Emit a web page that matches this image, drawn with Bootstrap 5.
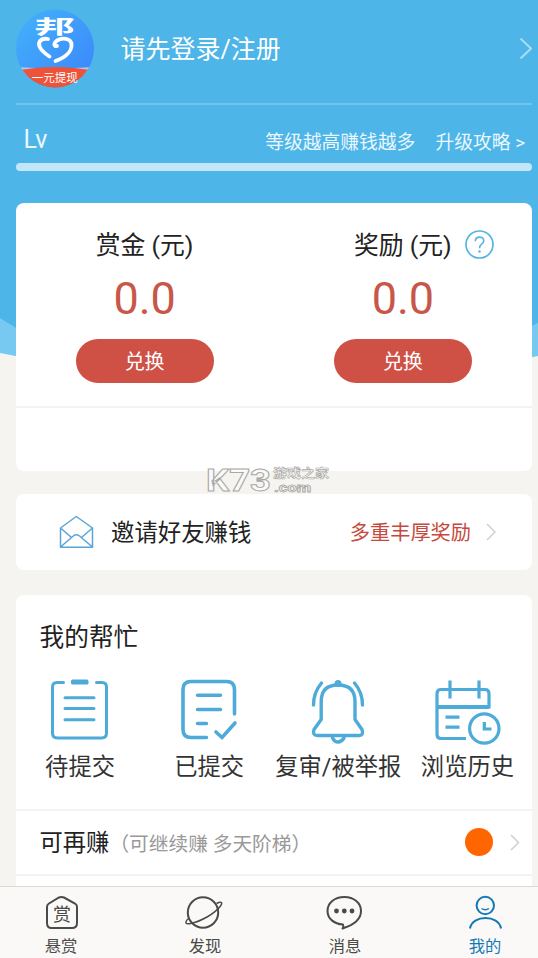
<!DOCTYPE html>
<html lang="zh-CN">
<head>
<meta charset="utf-8">
<meta name="viewport" content="width=device-width, initial-scale=1">
<title>我的</title>
<link href="https://cdn.jsdelivr.net/npm/bootstrap@5.3.0/dist/css/bootstrap.min.css" rel="stylesheet">
<style>
body{font-family:Roboto,"Noto Sans CJK SC",sans-serif;background:#f5f4f0;color:#222;line-height:1}
svg{display:block;flex:none}
svg text{font-family:Roboto,"Noto Sans CJK SC",sans-serif}
.app{width:538px;height:958px}
.screen{padding:0 6px 0 15.5px;min-height:0}
.hero-bg{z-index:0}
.layer{z-index:1}
.profile{height:105px;border-bottom:2px solid #71c4ee;padding-top:9px}
.login{font-size:25px;margin-left:26px;line-height:82px}
.level{height:58px;padding:0 7px 0 8px;font-size:18.8px;color:#e9f7fe}
.lv{font-size:25px;line-height:69px}
.level-text{line-height:77px}
.level-bar{height:8px;background:#c3e6f8;border-radius:4px}
.panel{background:#fff;border-radius:8px}
.wallet{margin-top:32px;height:268px}
.wallet-top{height:205px;border-bottom:2px solid #f3f3f2}
.wlabel{font-size:24.8px;line-height:32px;margin-top:27px}
.help{left:100%;top:0;margin-left:13px}
.amount{font-size:45px;line-height:50px;margin-top:12px;color:#c8574a}
.pill{width:138px;height:44px;border-radius:22px;background:#cf5044;color:#fff;font-size:20px;line-height:47px;margin-top:15px;padding:0;border:0}
.brandmark{left:200px;top:460px;z-index:2}
.invite{margin-top:23px;height:76px;padding:0 36px 0 43px}
.invite-title{font-size:23.4px;margin-left:17.5px;padding-top:3px}
.invite-note{font-size:20.2px;color:#c5493e;margin-right:15px;padding-top:3px}
.help-card{margin-top:25px;height:320px}
.sec-title{font-size:24.7px;line-height:32px;padding:27px 0 0 24px}
.tiles{margin-top:22px;height:133px}
.tile-name{font-size:23.3px;line-height:32px;margin-top:4.5px;color:#333;white-space:nowrap}
.entry{height:65px;border-top:2px solid #f3f3f2;padding:0 12px 0 24px;font-size:23.3px}
.entry-name{padding-top:3px}
.entry-note{font-size:19.7px;color:#999;padding-top:4px}
.dot{width:28px;height:28px;background:#ff6600;margin:-1px 17px 0 0}
.tabs{height:72px;border-top:1px solid #dcd9d8;background:#faf9f8;padding:7px 23px 0 31px;z-index:3}
.tab-link{width:60px;color:#4a4a48;font-size:16.3px;font-weight:400;text-decoration:none}
.tab-link span{line-height:24px;margin-top:3px}
.tab-link.current{color:#1479b3}
</style>
</head>
<body>
<div class="app d-flex flex-column position-relative overflow-hidden">
  <svg class="hero-bg position-absolute top-0 start-0" width="538" height="370" viewBox="0 0 538 370">
    <path d="M0 0H538V356Q270 410 0 353Z" fill="#77c9f1"/>
    <path d="M0 0H538V323L500 340L16 328L0 318Z" fill="#4db5e8"/>
  </svg>

  <main class="screen layer position-relative flex-grow-1 overflow-hidden">
    <header class="text-white">
      <div class="profile d-flex">
        <svg width="79" height="79" viewBox="16 9 79 79">
          <defs>
            <linearGradient id="sky" x1="0" y1="0" x2="1" y2="1"><stop offset="0" stop-color="#43b4fa"/><stop offset="1" stop-color="#3b83fb"/></linearGradient>
            <clipPath id="disc"><circle cx="55" cy="48.500" r="39"/></clipPath>
          </defs>
          <g clip-path="url(#disc)">
            <path d="M15 9H95V88H15Z" fill="url(#sky)"/>
            <path d="M15 67Q55 70 95 67V75H15Z" fill="#a9c9f4"/>
            <path d="M15 71Q55 63 95 71V88H15Z" fill="#ee5238"/>
          </g>
          <text transform="translate(34.500 34) scale(1.850 .9)" font-size="22" font-weight="700" fill="#fff">邦</text>
          <path d="M48 39C40 37.500 37.500 43 40 47.500C42 51.500 45 53.500 49.500 56.500M55.500 61C65 57.500 72 51.500 71.500 44.500C71 38 62 37.500 57 40.500C53 43.500 54 47 57 46" fill="none" stroke="#fff" stroke-width="3.800" stroke-linecap="round"/>
          <text x="54.700" y="81.500" text-anchor="middle" font-size="11.500" fill="#fff">一元提现</text>
        </svg>
        <div class="login flex-grow-1">请先登录/注册</div>
        <svg width="13" height="78" viewBox="519 9 13 78"><path d="M520.500 38.500L531 48.500L520.500 58.500" fill="none" stroke="#a9dcf5" stroke-width="2"/></svg>
      </div>
      <div class="level d-flex justify-content-between">
        <span class="lv">Lv</span>
        <span class="level-text d-flex"><span class="me-3 pe-1">等级越高赚钱越多</span><span>升级攻略 &gt;</span></span>
      </div>
      <div class="level-bar"></div>
    </header>

    <section class="panel wallet">
      <div class="wallet-top row g-0 text-center">
        <div class="col-6 d-flex flex-column align-items-center">
          <div class="wlabel">赏金 (元)</div>
          <div class="amount">0.0</div>
          <button class="pill btn">兑换</button>
        </div>
        <div class="col-6 d-flex flex-column align-items-center">
          <div class="wlabel position-relative">奖励 (元)
            <svg class="help position-absolute" width="29" height="29" viewBox="0 0 29 29"><circle cx="14.500" cy="14.500" r="13.500" fill="none" stroke="#58b4e0" stroke-width="1.700"/><path d="M10.300 11.300C10.300 5.700 18.800 5.900 18.800 10.700C18.800 14 14.500 14 14.500 18.300" fill="none" stroke="#58b4e0" stroke-width="1.600"/><circle cx="14.500" cy="21.500" r="1.200" fill="#58b4e0"/></svg>
          </div>
          <div class="amount">0.0</div>
          <button class="pill btn">兑换</button>
        </div>
      </div>
    </section>

    <section class="panel invite d-flex align-items-center">
      <svg width="35" height="34" viewBox="59 515 35 34"><path d="M60.500 528L76.300 516.500L92.500 528V547.300H60.500ZM60.500 528L71.500 537.500M92.500 528L81.500 537.500M60.500 547L73.300 536Q76.300 533.700 79.500 536L92.500 547" fill="none" stroke="#5aa5d5" stroke-width="1.500" stroke-linejoin="round"/></svg>
      <span class="invite-title flex-grow-1">邀请好友赚钱</span>
      <span class="invite-note">多重丰厚奖励</span>
      <svg width="10" height="18" viewBox="0 0 10 18"><path d="M1 1L9 9L1 17" fill="none" stroke="#cfcfcf" stroke-width="1.500"/></svg>
    </section>

    <section class="panel help-card">
      <h2 class="sec-title mb-0 fw-normal">我的帮忙</h2>
      <div class="tiles row row-cols-4 g-0">
        <div class="col d-flex flex-column align-items-center">
          <svg width="70" height="70" viewBox="45 676.500 70 70" fill="none" stroke="#4dabd9" stroke-width="3" stroke-linecap="round">
            <path d="M63.500 683H57Q52.500 683 52.500 687.500V733.500Q52.500 738.500 57.500 738.500H101.500Q106.500 738.500 106.500 733.500V687.500Q106.500 683 102 683H96.500M65 698.300H94M65 709H94M65 720.300H94"/><rect x="71" y="680" width="17.500" height="5" rx="1.500" fill="#4dabd9" stroke="none"/>
          </svg>
          <div class="tile-name">待提交</div>
        </div>
        <div class="col d-flex flex-column align-items-center">
          <svg width="70" height="70" viewBox="174 676.500 70 70" fill="none" stroke="#4dabd9" stroke-width="3.600" stroke-linecap="round">
            <path d="M206.500 738H191Q183 738 183 730V690Q183 682 191 682H226.500Q234.500 682 234.500 690V714.500M197.500 695.700H220.500M197.500 710H220.500M197.500 724H206.500"/><path d="M216 732.500L222 738L235 723.500"/>
          </svg>
          <div class="tile-name">已提交</div>
        </div>
        <div class="col d-flex flex-column align-items-center">
          <svg width="70" height="70" viewBox="303.500 676.500 70 70" fill="none" stroke="#4dabd9" stroke-width="3.400" stroke-linecap="round" stroke-linejoin="round">
            <path d="M321.700 720V702Q321.700 685.500 338.500 685.500Q355.500 685.500 355.500 702V720L362.500 730Q364.500 736 359.500 736H318Q312.500 736 314.500 730ZM333 738.500Q335 742.500 338.500 742.500Q342 742.500 344.500 738.500M322 683.500Q314 693 314 705.500M355 683.500Q363 693 363 705.500"/><circle cx="338.500" cy="684" r="3.500" fill="#4dabd9" stroke="none"/>
          </svg>
          <div class="tile-name">复审/被举报</div>
        </div>
        <div class="col d-flex flex-column align-items-center">
          <svg width="70" height="70" viewBox="432.500 676.500 70 70" fill="none" stroke="#4dabd9" stroke-width="3.200">
            <path d="M466.500 739H441.500Q437.500 739 437.500 735V694Q437.500 690 441.500 690H485.500Q489.500 690 489.500 694V709M450.500 681V699M479.500 681V699M446 717.700H460M446 727.600H460"/><path d="M437.500 707.500H489.500" stroke-width="4"/><circle cx="484.800" cy="729" r="14.700"/><path d="M484.800 722.500V729.500H492"/>
          </svg>
          <div class="tile-name">浏览历史</div>
        </div>
      </div>
      <div class="entry d-flex align-items-center">
        <span class="entry-name">可再赚</span><span class="entry-note flex-grow-1">（可继续赚 多天阶梯）</span>
        <span class="dot rounded-circle"></span>
        <svg width="10" height="17" viewBox="0 0 10 17"><path d="M1 1L8.500 8.500L1 16" fill="none" stroke="#cfcfcf" stroke-width="1.500"/></svg>
      </div>
      <div class="entry"></div>
    </section>
  </main>

  <svg class="brandmark position-absolute" width="135" height="38" viewBox="200 460 135 38">
    <g fill="#fafaf9" stroke="#aaa8a6" stroke-width="1" font-weight="700">
      <text x="206" y="491" font-size="31" textLength="65" lengthAdjust="spacingAndGlyphs">K73</text>
      <text x="273" y="477.500" font-size="12" stroke-width=".6" textLength="56" lengthAdjust="spacingAndGlyphs">游戏之家</text>
      <text x="274" y="491.500" font-size="12" stroke-width=".8" textLength="37" lengthAdjust="spacingAndGlyphs">.com</text>
    </g>
  </svg>

  <nav class="tabs d-flex justify-content-between position-relative">
    <a class="tab-link d-flex flex-column align-items-center" href="#">
      <svg width="40" height="38" viewBox="41 894 40 38" fill="none" stroke="currentColor" stroke-width="2"><path d="M59 897.500Q61.500 896.300 64 897.500L75 903.500Q77 904.700 77 907V923Q77 928 72 928H51.500Q47 928 47 923V907Q47 904.700 49 903.500Z"/><text x="62" y="920.500" text-anchor="middle" font-size="18" fill="currentColor" stroke="none">赏</text></svg>
      <span>悬赏</span>
    </a>
    <a class="tab-link d-flex flex-column align-items-center ms-1" href="#">
      <svg width="40" height="38" viewBox="184.500 894 40 38" fill="none" stroke="currentColor" stroke-width="2"><circle cx="202.500" cy="912.500" r="15.200"/><path d="M216 903.500C221 901 222.500 902.500 220 906C214 914 200 921.500 190 923.500C184.500 924.500 184 922 188 918.500" stroke-width="1.500"/></svg>
      <span>发现</span>
    </a>
    <a class="tab-link d-flex flex-column align-items-center" href="#">
      <svg width="40" height="38" viewBox="325 894 40 38" fill="none" stroke="currentColor" stroke-width="2"><path d="M343 924.500C334 924 327.500 918.500 327.500 911C327.500 903 334.500 897 344.300 897C354 897 361 903 361 911C361 920 352 925.500 342.500 928.500Q344 926.500 343 924.500Z" stroke-linejoin="round"/><g fill="currentColor" stroke="none"><circle cx="336.500" cy="911" r="2.400"/><circle cx="344.300" cy="911" r="2.400"/><circle cx="352" cy="911" r="2.400"/></g></svg>
      <span>消息</span>
    </a>
    <a class="tab-link current d-flex flex-column align-items-center" href="#">
      <svg width="40" height="38" viewBox="465 894 40 38" fill="none" stroke="currentColor" stroke-width="2"><circle cx="485.300" cy="905.500" r="8.700"/><path d="M470 928.500C472 914.500 499 914.500 501 928.500"/><path d="M481.500 908.500Q485.300 911 489 908.500" stroke-width="1.400"/></svg>
      <span>我的</span>
    </a>
  </nav>
</div>
<script src="https://cdn.jsdelivr.net/npm/bootstrap@5.3.0/dist/js/bootstrap.bundle.min.js"></script>
</body>
</html>
